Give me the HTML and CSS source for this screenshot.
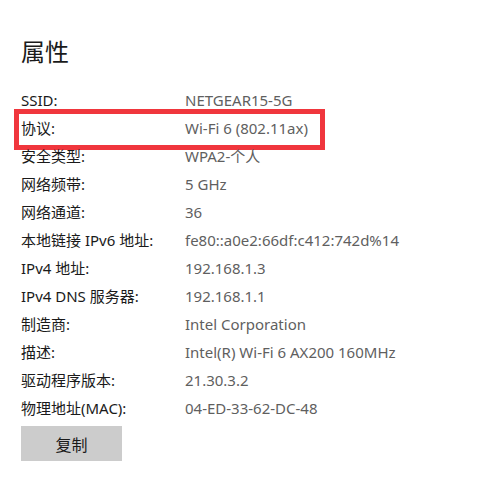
FILE: index.html
```html
<!DOCTYPE html>
<html lang="zh-CN">
<head>
    <meta charset="UTF-8">
    <title>属性</title>
    <link rel="stylesheet" href="styles.css">
</head>
<body>

    <h1>属性</h1>

    <div class="props">
        <div class="row"><span class="label">SSID:</span><span class="value">NETGEAR15-5G</span></div>
        <div class="row marked"><span class="label">协议:</span><span class="value">Wi-Fi 6 (802.11ax)</span><div class="highlight"></div></div>
        <div class="row"><span class="label">安全类型:</span><span class="value">WPA2-个人</span></div>
        <div class="row"><span class="label">网络频带:</span><span class="value">5 GHz</span></div>
        <div class="row"><span class="label">网络通道:</span><span class="value">36</span></div>
        <div class="row"><span class="label">本地链接 IPv6 地址:</span><span class="value">fe80::a0e2:66df:c412:742d%14</span></div>
        <div class="row"><span class="label">IPv4 地址:</span><span class="value">192.168.1.3</span></div>
        <div class="row"><span class="label">IPv4 DNS 服务器:</span><span class="value">192.168.1.1</span></div>
        <div class="row"><span class="label">制造商:</span><span class="value">Intel Corporation</span></div>
        <div class="row"><span class="label">描述:</span><span class="value">Intel(R) Wi-Fi 6 AX200 160MHz</span></div>
        <div class="row"><span class="label">驱动程序版本:</span><span class="value">21.30.3.2</span></div>
        <div class="row"><span class="label">物理地址(MAC):</span><span class="value">04-ED-33-62-DC-48</span></div>
    </div>

    <button class="copy">复制</button>

</body>
</html>
```

FILE: styles.css
```css
body {
    font-family: "Noto Sans", "Noto Sans CJK SC", sans-serif;
    background-color: #ffffff;
    color: #1a1a1a;
    margin: 0;
    padding: 35px 21px 0 21px;
}

h1 {
    font-family: "Noto Sans CJK SC", sans-serif;
    font-size: 24px;
    font-weight: normal;
    line-height: 32px;
    margin: 0 0 19px 0;
}

.props {
    display: flex;
    flex-direction: column;
}

.row {
    position: relative;
    display: grid;
    grid-template-columns: 164px 1fr;
    height: 28px;
    line-height: 28px;
    font-size: 15px;
}

.label {
    color: #1a1a1a;
}

.value {
    color: #5f5f5f;
}

.highlight {
    position: absolute;
    top: -5px;
    left: -7px;
    width: 301px;
    height: 31px;
    border: 5px solid #f0363d;
}

.copy {
    margin-top: 4px;
    width: 101px;
    height: 35px;
    border: none;
    background-color: #cccccc;
    color: #1a1a1a;
    font-family: "Noto Sans CJK SC", sans-serif;
    font-size: 16px;
    padding: 0;
}
```
